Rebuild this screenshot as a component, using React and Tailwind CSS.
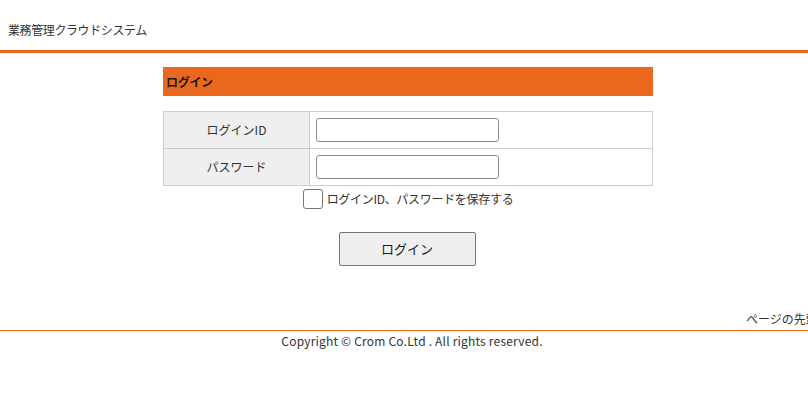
import { useState } from "react";

export default function App() {
  const [saveLogin, setSaveLogin] = useState(false);

  return (
    <div
      className="w-[808px] overflow-hidden bg-white text-[#333]"
      style={{ fontFamily: '"Noto Sans CJK JP", "Noto Sans", sans-serif' }}
    >
      <div className="w-[816px]">
        {/* Header */}
        <header className="h-[53px] border-b-[3px] border-[#ec671e] px-2 pt-[21px] text-[12px] leading-[18px] tracking-[-0.4px]">
          業務管理クラウドシステム
        </header>

        {/* Login form */}
        <main className="mx-auto mt-[14px] w-[490px]">
          <h1 className="flex h-[29px] items-center bg-[#ec671e] px-[3px] text-[12px] font-bold tracking-[-0.3px] text-[#1a1a1a]">
            ログイン
          </h1>

          <table className="mt-[15px] w-full border-collapse text-[12px]">
            <tbody>
              <tr className="h-[37px]">
                <th className="w-[146px] border border-[#cccccc] bg-[#efefef] text-center font-normal">
                  ログインID
                </th>
                <td className="border border-[#cccccc] pl-[6px]">
                  <input
                    type="text"
                    className="block h-[24px] w-[183px] rounded-[3px] border border-[#8f8f8f] px-1 outline-none"
                  />
                </td>
              </tr>
              <tr className="h-[37px]">
                <th className="w-[146px] border border-[#cccccc] bg-[#efefef] text-center font-normal">
                  パスワード
                </th>
                <td className="border border-[#cccccc] pl-[6px]">
                  <input
                    type="password"
                    className="block h-[24px] w-[183px] rounded-[3px] border border-[#8f8f8f] px-1 outline-none"
                  />
                </td>
              </tr>
            </tbody>
          </table>

          <label className="mt-[3px] flex items-center justify-center gap-[4px] text-[12px] tracking-[-0.3px]">
            <input
              type="checkbox"
              checked={saveLogin}
              onChange={(e) => setSaveLogin(e.target.checked)}
              className="h-[20px] w-[20px] appearance-none rounded-[3px] border border-[#767676] bg-white"
            />
            <span>ログインID、パスワードを保存する</span>
          </label>

          <div className="mt-[23px] flex justify-center pr-[2px]">
            <button className="h-[34px] w-[137px] rounded-[2px] border border-[#767676] bg-[#efefef] text-[13px] text-[#1a1a1a]">
              ログイン
            </button>
          </div>
        </main>

        {/* Footer */}
        <div className="mt-[45px] ml-[746px] whitespace-nowrap text-[12px] leading-[16px]">
          ページの先頭へ
        </div>
        <footer className="mt-[3px] border-t border-[#ec671e] pl-[8px] pt-[2px] text-center text-[12px] leading-[16px] tracking-[0.2px]">
          Copyright © Crom Co.Ltd . All rights reserved.
        </footer>
        <div className="h-[60px]" />
      </div>
    </div>
  );
}
